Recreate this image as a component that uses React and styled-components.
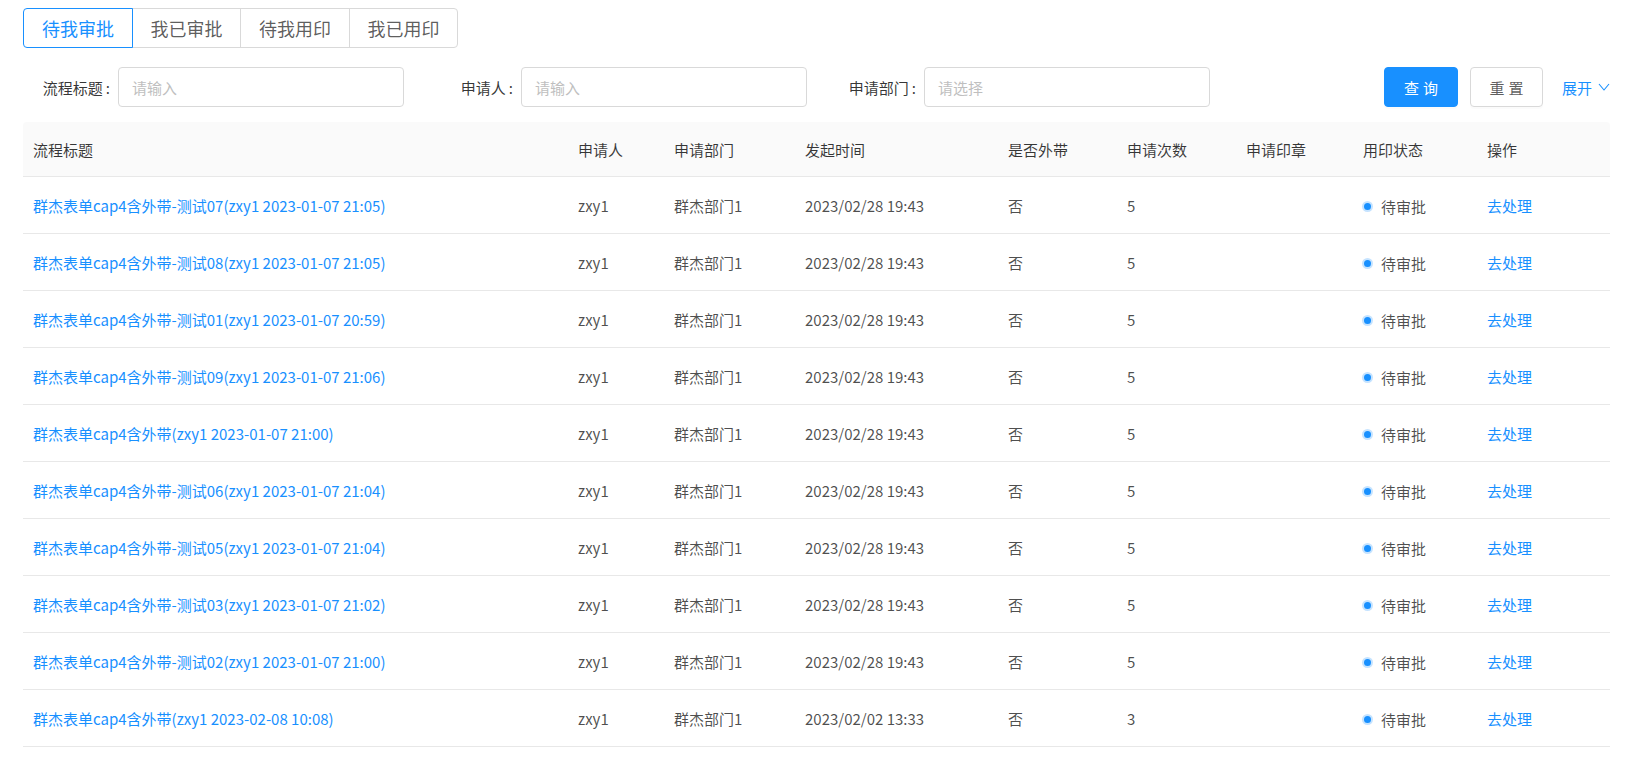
import React from "react";
import styled, { createGlobalStyle } from "styled-components";

const Global = createGlobalStyle`
  html, body { margin: 0; padding: 0; background: #fff; }
  body {
    font-family: "Noto Sans CJK SC", "Noto Sans", sans-serif;
    color: rgba(0,0,0,0.85);
  }
  * { box-sizing: border-box; }
`;

const Page = styled.div`
  padding: 8px 18px 0 23px;
  width: 1628px;
`;

const Tabs = styled.div`
  display: flex;
  height: 40px;
`;

const Tab = styled.div`
  display: flex;
  align-items: center;
  justify-content: center;
  width: ${(p) => p.$w}px;
  height: 40px;
  font-size: 18px;
  color: ${(p) => (p.$active ? "#1890ff" : "rgba(0,0,0,0.65)")};
  border: 1px solid ${(p) => (p.$active ? "#1890ff" : "#d9d9d9")};
  margin-left: ${(p) => (p.$first ? 0 : -1)}px;
  position: relative;
  z-index: ${(p) => (p.$active ? 1 : 0)};
  &:first-child { border-radius: 4px 0 0 4px; }
  &:last-child { border-radius: 0 4px 4px 0; }
`;

const Form = styled.div`
  display: flex;
  align-items: center;
  margin-top: 19px;
  height: 40px;
`;

const Fields = styled.div`
  display: grid;
  grid-template-columns: repeat(3, 383px);
  column-gap: 20px;
`;

const Field = styled.div`
  display: flex;
  align-items: center;
`;

const Label = styled.label`
  width: 95px;
  padding-right: 8px;
  text-align: right;
  font-size: 15px;
  color: rgba(0,0,0,0.8);
  white-space: nowrap;
`;

const Colon = styled.span`
  margin-left: 3px;
`;

const Input = styled.div`
  width: 286px;
  height: 40px;
  border: 1px solid #d9d9d9;
  border-radius: 4px;
  display: flex;
  align-items: center;
  padding: 0 13px;
  font-size: 15px;
  color: #bfbfbf;
`;

const Actions = styled.div`
  margin-left: auto;
  display: flex;
  align-items: center;
`;

const Button = styled.button`
  width: ${(p) => p.$w}px;
  height: 40px;
  border-radius: 4px;
  font-family: inherit;
  font-size: 15px;
  letter-spacing: 4px;
  text-indent: 4px;
  margin-right: ${(p) => p.$mr}px;
  background: ${(p) => (p.$primary ? "#1890ff" : "#fff")};
  color: ${(p) => (p.$primary ? "#fff" : "rgba(0,0,0,0.65)")};
  border: 1px solid ${(p) => (p.$primary ? "#1890ff" : "#d9d9d9")};
  box-shadow: 0 2px 0 rgba(0,0,0,0.015);
  cursor: pointer;
`;

const Expand = styled.a`
  display: flex;
  align-items: center;
  gap: 6px;
  font-size: 15px;
  color: #1890ff;
  cursor: pointer;
`;

const Table = styled.table`
  margin-top: 15px;
  width: 1587px;
  border-collapse: separate;
  border-spacing: 0;
  table-layout: fixed;
  font-size: 15px;
`;

const Col = styled.col`
  width: ${(p) => p.$w}px;
`;

const Th = styled.th`
  height: 55px;
  padding: 0 10px;
  text-align: left;
  font-weight: normal;
  color: rgba(0,0,0,0.78);
  background: #fafafa;
  border-bottom: 1px solid #e8e8e8;
  &:first-child { border-top-left-radius: 4px; }
  &:last-child { border-top-right-radius: 4px; }
`;

const Td = styled.td`
  height: 57px;
  padding: 0 10px;
  color: rgba(0,0,0,0.7);
  border-bottom: 1px solid #e8e8e8;
  white-space: nowrap;
`;

const Link = styled.a`
  color: #1890ff;
  cursor: pointer;
`;

const Status = styled.span`
  display: inline-flex;
  align-items: center;
  gap: 10px;
  margin-left: 1px;
`;

const Dot = styled.span`
  width: 7px;
  height: 7px;
  border-radius: 50%;
  background: #1890ff;
  box-shadow: 0 0 0 2px rgba(24,144,255,0.25);
`;

const tabs = [
  { t: "待我审批", w: 110 },
  { t: "我已审批", w: 109 },
  { t: "待我用印", w: 110 },
  { t: "我已用印", w: 109 },
];

const cols = [545, 96, 131, 203, 119, 119, 117, 124, 133];
const headers = ["流程标题", "申请人", "申请部门", "发起时间", "是否外带", "申请次数", "申请印章", "用印状态", "操作"];

const rows = [
  ["群杰表单cap4含外带-测试07(zxy1 2023-01-07 21:05)", "2023/02/28 19:43", "5"],
  ["群杰表单cap4含外带-测试08(zxy1 2023-01-07 21:05)", "2023/02/28 19:43", "5"],
  ["群杰表单cap4含外带-测试01(zxy1 2023-01-07 20:59)", "2023/02/28 19:43", "5"],
  ["群杰表单cap4含外带-测试09(zxy1 2023-01-07 21:06)", "2023/02/28 19:43", "5"],
  ["群杰表单cap4含外带(zxy1 2023-01-07 21:00)", "2023/02/28 19:43", "5"],
  ["群杰表单cap4含外带-测试06(zxy1 2023-01-07 21:04)", "2023/02/28 19:43", "5"],
  ["群杰表单cap4含外带-测试05(zxy1 2023-01-07 21:04)", "2023/02/28 19:43", "5"],
  ["群杰表单cap4含外带-测试03(zxy1 2023-01-07 21:02)", "2023/02/28 19:43", "5"],
  ["群杰表单cap4含外带-测试02(zxy1 2023-01-07 21:00)", "2023/02/28 19:43", "5"],
  ["群杰表单cap4含外带(zxy1 2023-02-08 10:08)", "2023/02/02 13:33", "3"],
];

const Chevron = () => (
  <svg width="12" height="8" viewBox="0 0 12 8" fill="none">
    <polyline points="1,1 6,7 11,1" stroke="#1890ff" strokeWidth="1.1" />
  </svg>
);

export default function App() {
  return (
    <Page>
      <Global />
      <Tabs>
        {tabs.map((t, i) => (
          <Tab key={t.t} $w={t.w} $active={i === 0} $first={i === 0}>
            {t.t}
          </Tab>
        ))}
      </Tabs>
      <Form>
        <Fields>
          <Field>
            <Label>流程标题<Colon>:</Colon></Label>
            <Input>请输入</Input>
          </Field>
          <Field>
            <Label>申请人<Colon>:</Colon></Label>
            <Input>请输入</Input>
          </Field>
          <Field>
            <Label>申请部门<Colon>:</Colon></Label>
            <Input>请选择</Input>
          </Field>
        </Fields>
        <Actions>
          <Button $primary $w={74} $mr={12}>查询</Button>
          <Button $w={73} $mr={19}>重置</Button>
          <Expand>
            展开 <Chevron />
          </Expand>
        </Actions>
      </Form>
      <Table>
        <colgroup>
          {cols.map((w, i) => (
            <Col key={i} $w={w} />
          ))}
        </colgroup>
        <thead>
          <tr>
            {headers.map((h) => (
              <Th key={h}>{h}</Th>
            ))}
          </tr>
        </thead>
        <tbody>
          {rows.map((r, i) => (
            <tr key={i}>
              <Td><Link>{r[0]}</Link></Td>
              <Td>zxy1</Td>
              <Td>群杰部门1</Td>
              <Td>{r[1]}</Td>
              <Td>否</Td>
              <Td>{r[2]}</Td>
              <Td></Td>
              <Td>
                <Status>
                  <Dot />
                  待审批
                </Status>
              </Td>
              <Td><Link>去处理</Link></Td>
            </tr>
          ))}
        </tbody>
      </Table>
    </Page>
  );
}
